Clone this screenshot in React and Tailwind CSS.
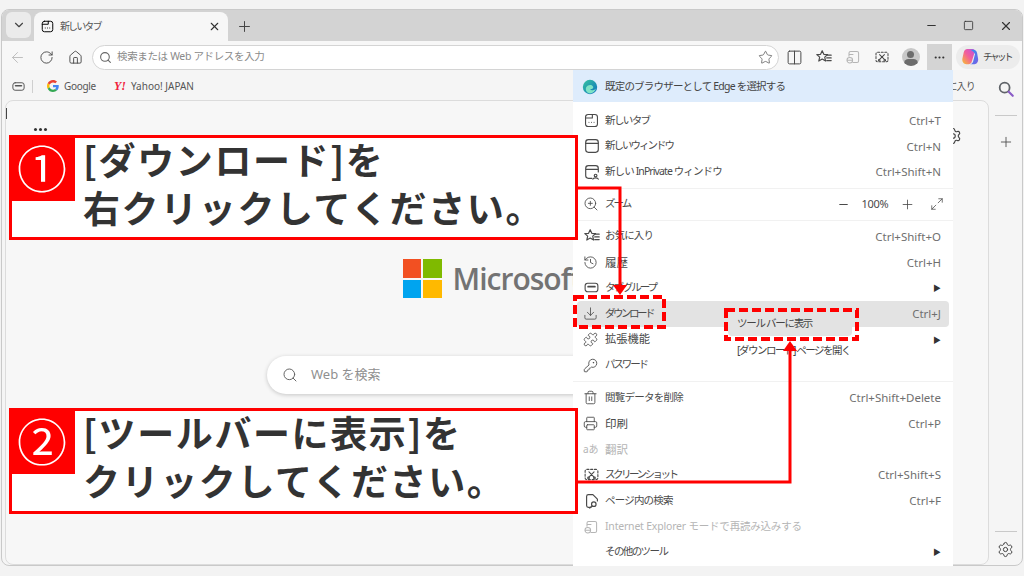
import {
  ArrowLeft, RotateCw, Home, Search, Star, X, Plus, Minus, ChevronDown, ZoomIn, History,
  Download, Puzzle, KeyRound, Trash2, Printer, Settings, MoreHorizontal, Square, Maximize2, Columns2,
} from "lucide-react";

const jp = "font-['Noto_Sans','Noto_Sans_CJK_JP',sans-serif]";

function Svg({ size = 18, children, className = "" }) {
  return (
    <svg width={size} height={size} viewBox="0 0 20 20" fill="none" stroke="currentColor" strokeWidth="1.3" strokeLinecap="round" strokeLinejoin="round" className={className}>
      {children}
    </svg>
  );
}

const NewTabIcon = ({ size }) => (
  <Svg size={size}>
    <rect x="3" y="3" width="14" height="14" rx="3" />
    <path d="M3 7h8V3M7 12h.01M10 12h.01M13 12h.01" />
  </Svg>
);
const WindowIcon = () => (
  <Svg>
    <rect x="3" y="3" width="14" height="14" rx="3" />
    <path d="M3 7h14" />
  </Svg>
);
const PrivateIcon = () => (
  <Svg>
    <path d="M10 17H6a3 3 0 0 1-3-3V6a3 3 0 0 1 3-3h8a3 3 0 0 1 3 3v4M3 7h14" />
    <circle cx="14" cy="14" r="1.5" />
    <path d="M11 18c.5-2 5.500-2 6 0" />
  </Svg>
);
const FavIcon = ({ size }) => (
  <Svg size={size}>
    <path d="M8 3l1.800 4 4.200.400-3.200 2.800 1 4.300L8 12.300l-3.800 2.200 1-4.300L2 7.400 6.200 7z" />
    <path d="M14 8h4M13 11h5M13 14h5" />
  </Svg>
);
const TabGroupIcon = ({ size }) => (
  <Svg size={size}>
    <rect x="2.500" y="5" width="15" height="10" rx="3" />
    <path d="M6 9h8" strokeWidth="2" />
  </Svg>
);
const ShotIcon = ({ size }) => (
  <Svg size={size}>
    <rect x="2.500" y="4" width="15" height="12" rx="2" strokeDasharray="2.500 2" />
    <path d="M7 7l6 6M13 7l-6 6" />
    <circle cx="6.500" cy="14" r="1" />
    <circle cx="13.500" cy="14" r="1" />
  </Svg>
);
const FindIcon = () => (
  <Svg>
    <path d="M9 17H6a2 2 0 0 1-2-2V5a2 2 0 0 1 2-2h5l5 5v2" />
    <circle cx="12" cy="13.500" r="2.500" />
    <path d="M10 15.500L7.500 18" />
  </Svg>
);
const IeIcon = ({ size }) => (
  <Svg size={size}>
    <path d="M7 3h8a2 2 0 0 1 2 2v10a2 2 0 0 1-2 2H10M5 9V5a2 2 0 0 1 2-2M5 7h5" />
    <circle cx="6" cy="14" r="3.500" />
    <path d="M3 14h6" />
  </Svg>
);
const SplitIcon = () => <Columns2 size={17} strokeWidth={1.4} />;

// sidebar search, the handle is purple in the reference
function SideSearch() {
  return (
    <svg width="18" height="18" viewBox="0 0 20 20" fill="none" strokeLinecap="round">
      <circle cx="8.500" cy="8.500" r="5.500" stroke="#5f6368" strokeWidth="2" />
      <path d="M13 13l4.500 4.500" stroke="#8a5cc7" strokeWidth="2.400" />
    </svg>
  );
}

function GoogleLogo() {
  return (
    <svg width="12" height="12" viewBox="0 0 48 48">
      <path fill="#EA4335" d="M24 9.500c3.500 0 6.700 1.200 9.200 3.600l6.900-6.900C35.900 2.400 30.500 0 24 0 14.600 0 6.500 5.400 2.600 13.200l8 6.200C12.500 13.700 17.800 9.500 24 9.500z" />
      <path fill="#4285F4" d="M47 24.500c0-1.600-.1-3.100-.4-4.500H24v9h12.900c-.6 3-2.200 5.500-4.700 7.200l7.700 6c4.500-4.200 7.100-10.300 7.100-17.700z" />
      <path fill="#FBBC05" d="M10.600 28.600c-.5-1.400-.8-3-.8-4.600s.3-3.200.8-4.600l-8-6.200C.9 16.500 0 20.100 0 24s.9 7.500 2.600 10.800z" />
      <path fill="#34A853" d="M24 48c6.500 0 11.900-2.100 15.900-5.800l-7.700-6c-2.200 1.400-4.900 2.300-8.200 2.300-6.200 0-11.500-4.200-13.400-9.900l-8 6.200C6.500 42.600 14.600 48 24 48z" />
    </svg>
  );
}

function EdgeLogo() {
  return (
    <svg width="16" height="16" viewBox="0 0 20 20">
      <defs>
        <linearGradient id="edgeA" x1="0" y1="0" x2="1" y2="1">
          <stop offset="0" stopColor="#37c6a0" />
          <stop offset="1" stopColor="#0c6fc0" />
        </linearGradient>
      </defs>
      <circle cx="10" cy="10" r="9" fill="url(#edgeA)" />
      <path d="M5 11c1-4 8-5 9-1 .5 2-2 3-4 2.500 2 2.500 5.500 2 7.500-.5-1 4-5 6.500-8 6-3-.5-5.500-3.500-4.500-7z" fill="#7fe3c5" />
    </svg>
  );
}

function CopilotLogo() {
  return (
    <svg width="18" height="18" viewBox="0 0 20 20">
      <defs>
        <linearGradient id="coA" x1="0" y1="0" x2="1" y2="1">
          <stop offset="0" stopColor="#2a9bf0" />
          <stop offset="1" stopColor="#7b5ce6" />
        </linearGradient>
        <linearGradient id="coB" x1="0" y1="1" x2="1" y2="0">
          <stop offset="0" stopColor="#f7c12e" />
          <stop offset="0.5" stopColor="#f3609a" />
          <stop offset="1" stopColor="#c04fe0" />
        </linearGradient>
      </defs>
      <path d="M7 1h6c1.500 0 2 1 2.500 2.500L12 15c-.5 2-2 3-3.500 3H6c-3 0-5-3-4.500-6L3 5c.5-2.500 2-4 4-4z" fill="url(#coB)" />
      <path d="M10 2h4c2 0 3.500 1.500 4 4l1 6c.5 3-1.500 6-4 6h-5c2 0 3-1.500 3.500-3l2-8C15 5 13 3 10 2z" fill="url(#coA)" />
    </svg>
  );
}

function ToolIcon({ children, className = "" }) {
  return <div className={`w-[29px] h-[26px] flex items-center justify-center text-[#4a4a4a] ${className}`}>{children}</div>;
}

function Row({ icon, label, shortcut, arrow, disabled, active, sp = "text-[10.500px] tracking-[-1.600px]" }) {
  return (
    <div className={`h-[25.8px] mx-1 pl-[6px] pr-[8px] flex items-center rounded ${active ? "bg-[#e3e3e3]" : ""} ${disabled ? "text-[#b5b5b5]" : "text-[#4a4a4a]"}`}>
      <div className="w-[22px] flex items-center">{icon}</div>
      <span className={`flex-1 ${sp}`}>{label}</span>
      {shortcut && <span className="text-[11.500px] text-[#6f6f6f]">{shortcut}</span>}
      {arrow && <span className="text-[8px] text-[#333]">▶</span>}
    </div>
  );
}

function Sep() {
  return (
    <div className="h-[6.400px] flex items-center">
      <div className="w-full h-px bg-[#f1f1f1]" />
    </div>
  );
}

function Callout({ className, num, line1, line2 }) {
  return (
    <div className={`absolute left-[9px] w-[569px] bg-white border-[3px] border-[#ff0000] ${className}`}>
      <div className="absolute -left-[3px] -top-[3px] w-[66px] h-[66px] pb-[4px] bg-[#ff0000] flex items-center justify-center text-white text-[50px] leading-none font-['Noto_Sans_CJK_JP',sans-serif]">
        {num}
      </div>
      <div className="pl-[71px] -mt-[3px] text-[37px] leading-[48px] font-bold tracking-[1.600px] text-[#333] font-['Noto_Sans_CJK_JP',sans-serif] whitespace-nowrap">
        <div>{line1}</div>
        <div>{line2}</div>
      </div>
    </div>
  );
}

export default function App() {
  return (
    <div className={`relative w-[1024px] h-[576px] overflow-hidden bg-[#f3f3f3] ${jp}`}>
      {/* browser window */}
      <div className="absolute left-[1px] top-[9px] w-[1022px] h-[557px] rounded-lg border border-[#c9c9c9] bg-[#f5f5f5] overflow-hidden flex flex-col">
        {/* tab strip */}
        <div className="h-[31px] bg-[#d3d3d3] flex items-end pl-1 shrink-0">
          <div className="w-[25px] h-[26px] mb-[3px] rounded-md bg-[#ebebeb] flex items-center justify-center text-[#444]">
            <ChevronDown size={14} />
          </div>
          <div className="ml-[3px] w-[194px] h-[29px] rounded-t-lg bg-[#f7f7f7] flex items-center pl-[6px] pr-[7px]">
            <NewTabIcon size={15} />
            <span className="ml-[5px] text-[10px] tracking-[-1.900px] text-[#555] flex-1">新しいタブ</span>
            <X size={13} className="text-[#333]" />
          </div>
          <div className="w-[32px] h-[29px] flex items-center justify-center text-[#444]">
            <Plus size={17} strokeWidth={1.4} />
          </div>
          <div className="flex-1" />
          <div className="flex items-center h-[31px] text-[#333] -mr-[2px]">
            <div className="w-[37px] flex justify-center"><Minus size={13} /></div>
            <div className="w-[37px] flex justify-center"><Square size={11} strokeWidth={1.800} /></div>
            <div className="w-[37px] flex justify-center"><X size={14} /></div>
          </div>
        </div>

        {/* toolbar */}
        <div className="h-[29px] pt-[3px] flex items-center pl-[1px] shrink-0 bg-[#f7f7f7]">
          <ToolIcon className="!text-[#b9b9b9]"><ArrowLeft size={17} strokeWidth={1.300} /></ToolIcon>
          <ToolIcon><RotateCw size={15} strokeWidth={1.500} /></ToolIcon>
          <ToolIcon><Home size={15} strokeWidth={1.500} /></ToolIcon>
          <div className="ml-[2px] w-[687px] h-[25px] rounded-full border border-[#d4d4d4] bg-white flex items-center pl-[6px] pr-[5px]">
            <Search size={13} className="text-[#666]" />
            <span className="ml-[5px] text-[10.500px] tracking-[-0.350px] text-[#8a8a8a] flex-1">検索または Web アドレスを入力</span>
            <Star size={15} strokeWidth={1.200} className="text-[#555]" />
          </div>
          <ToolIcon className="ml-[1px]"><SplitIcon /></ToolIcon>
          <ToolIcon><FavIcon size={18} /></ToolIcon>
          <ToolIcon className="!text-[#b5b5b5]"><IeIcon size={16} /></ToolIcon>
          <ToolIcon><ShotIcon size={16} /></ToolIcon>
          <ToolIcon>
            <div className="relative w-[18px] h-[18px] rounded-full bg-[#c8c8c8] overflow-hidden">
              <div className="absolute left-[5.500px] top-[3px] w-[7px] h-[7px] rounded-full bg-[#6c6c6c]" />
              <div className="absolute left-[2px] top-[11px] w-[14px] h-[9px] rounded-full bg-[#6c6c6c]" />
            </div>
          </ToolIcon>
          <div className="ml-[2px] w-[25px] h-[26px] bg-[#d4d4d4] flex items-center justify-center text-[#333]">
            <MoreHorizontal size={13} />
          </div>
          <div className="ml-1 w-[64px] h-[24px] rounded-full bg-[#ececec] flex items-center pl-[5px]">
            <CopilotLogo />
            <span className="ml-[4px] text-[9.500px] tracking-[-2.500px] text-[#444]">チャット</span>
          </div>
        </div>

        {/* bookmarks + content + sidebar */}
        <div className="flex-1 flex min-h-0">
          <div className="w-[987px] flex flex-col">
            <div className="h-[30px] pt-[2px] flex items-center pl-[9px] text-[10px] text-[#555] shrink-0">
              <TabGroupIcon size={15} />
              <div className="ml-[6px] w-px h-[13px] bg-[#cfcfcf]" />
              <div className="ml-[14px]"><GoogleLogo /></div>
              <span className="ml-[5px] tracking-[-0.300px]">Google</span>
              <span className="ml-[18px] text-[12px] font-bold italic text-[#f0203c] font-['Liberation_Serif',serif]">Y!</span>
              <span className="ml-[5px]">Yahoo! JAPAN</span>
              <div className="flex-1" />
              <span className="mr-[14px] tracking-[-0.800px]">お気に入り</span>
            </div>
            <div className="relative flex-1 ml-[3px] rounded-t-lg rounded-b-lg border border-[#dcdcdc] bg-[#f7f7f7]">
              <div className="absolute left-0 top-[7px] w-px h-[11px] bg-[#444]" />
              <div className="absolute left-[28px] top-[27px] flex gap-[2px]">
                <div className="w-[3px] h-[3px] rounded-full bg-[#333]" />
                <div className="w-[3px] h-[3px] rounded-full bg-[#333]" />
                <div className="w-[3px] h-[3px] rounded-full bg-[#333]" />
              </div>
              <Settings size={18} strokeWidth={1.500} className="absolute right-[26px] top-[26px] text-[#444]" />
              <div className="flex flex-col items-center pt-[158px]">
                <div className="flex items-center mr-[10px]">
                  <div className="grid grid-cols-2 gap-[2px] w-[39px] h-[39px]">
                    <div className="bg-[#f25022]" />
                    <div className="bg-[#7fba00]" />
                    <div className="bg-[#00a4ef]" />
                    <div className="bg-[#ffb900]" />
                  </div>
                  <span className="ml-[11px] text-[30px] leading-none font-semibold tracking-[-1px] text-[#737373] font-['Open_Sans',sans-serif]">Microsoft</span>
                </div>
                <div className="mt-[58px] w-[460px] h-[38px] rounded-full bg-white shadow-[0_1px_4px_rgba(0,0,0,0.2)] flex items-center pl-[15px]">
                  <Search size={16} strokeWidth={1.500} className="text-[#666]" />
                  <span className="ml-[13px] text-[13px] text-[#8f8f8f]">Web を検索</span>
                </div>
              </div>
            </div>
          </div>
          <div className="flex-1 flex flex-col items-center pt-[10px] pb-[7px] text-[#555]">
            <SideSearch />
            <div className="mt-[17px] w-[22px] h-px bg-[#c9c9c9]" />
            <Plus size={16} strokeWidth={1.400} className="mt-[18px]" />
            <div className="flex-1" />
            <div className="w-[22px] h-px bg-[#c9c9c9]" />
            <Settings size={17} strokeWidth={1.400} className="mt-[9px] text-[#444]" />
          </div>
        </div>
      </div>

      {/* edge menu */}
      <div className="absolute left-[573px] top-[70px] w-[380px] h-[496px] bg-white">
        <div className="h-[32px] pt-[1px] bg-[#deecfc] flex items-center pl-[9px]">
          <EdgeLogo />
          <span className="ml-[7px] text-[10.500px] tracking-[-0.800px] text-[#444]">既定のブラウザーとして Edge を選択する</span>
        </div>
        <div className="pt-[5.500px]">
          <Row icon={<NewTabIcon size={17} />} label="新しいタブ" shortcut="Ctrl+T" />
          <Row icon={<WindowIcon />} label="新しいウィンドウ" shortcut="Ctrl+N" sp="text-[10.500px] tracking-[-2px]" />
          <Row icon={<PrivateIcon />} label="新しい InPrivate ウィンドウ" shortcut="Ctrl+Shift+N" sp="text-[10.500px] tracking-[-0.900px]" />
          <Sep />
          <div className="h-[25.800px] mx-1 pl-[6px] pr-[5px] flex items-center text-[#4a4a4a]">
            <div className="w-[22px]"><ZoomIn size={16} strokeWidth={1.300} /></div>
            <span className="text-[10.500px] tracking-[-2px] flex-1">ズーム</span>
            <Minus size={13} className="mr-[9px]" />
            <span className="text-[11px] w-[32px] text-center tracking-[-0.300px]">100%</span>
            <Plus size={15} strokeWidth={1.300} className="ml-[9px]" />
            <Maximize2 size={14} strokeWidth={1.300} className="ml-[15px]" />
          </div>
          <Sep />
          <Row icon={<FavIcon size={18} />} label="お気に入り" shortcut="Ctrl+Shift+O" sp="text-[10.500px] tracking-[-0.900px]" />
          <Row icon={<History size={15} strokeWidth={1.400} />} label="履歴" shortcut="Ctrl+H" sp="text-[11.500px]" />
          <Row icon={<TabGroupIcon size={17} />} label="タブ グループ" arrow sp="text-[10.500px] tracking-[-2px]" />
          <Row active icon={<Download size={15} strokeWidth={1.300} />} label="ダウンロード" shortcut="Ctrl+J" sp="text-[10.500px] tracking-[-2.500px]" />
          <Row icon={<Puzzle size={15} strokeWidth={1.400} />} label="拡張機能" arrow sp="text-[11.250px]" />
          <Row icon={<KeyRound size={15} strokeWidth={1.400} />} label="パスワード" sp="text-[10.500px] tracking-[-2.100px]" />
          <Sep />
          <Row icon={<Trash2 size={15} strokeWidth={1.400} />} label="閲覧データを削除" shortcut="Ctrl+Shift+Delete" sp="text-[10.500px] tracking-[-0.750px]" />
          <Row icon={<Printer size={15} strokeWidth={1.400} />} label="印刷" shortcut="Ctrl+P" sp="text-[11.500px]" />
          <Row disabled icon={<span className="text-[10px] leading-none">aあ</span>} label="翻訳" sp="text-[11.500px]" />
          <Row icon={<ShotIcon size={17} />} label="スクリーンショット" shortcut="Ctrl+Shift+S" sp="text-[10.500px] tracking-[-2.500px]" />
          <Row icon={<FindIcon />} label="ページ内の検索" shortcut="Ctrl+F" sp="text-[10.500px] tracking-[-0.800px]" />
          <Row disabled icon={<IeIcon size={16} />} label="Internet Explorer モードで再読み込みする" sp="text-[10.500px] tracking-[-0.200px]" />
          <Row label="その他のツール" arrow sp="text-[10.500px] tracking-[-1.600px]" />
        </div>

        {/* download submenu */}
        <div className="absolute left-[155px] top-[242px] w-[124px] h-[44px] text-[10.500px] text-[#444]">
          <div className="h-[24px] bg-[#e3e3e3] rounded flex items-center pl-[9px] tracking-[-1.300px]">ツール バーに表示</div>
          <div className="mt-[2px] h-[25px] flex items-center pl-[9px] whitespace-nowrap bg-white tracking-[-1.500px]">[ダウンロード] ページを開く</div>
        </div>
      </div>

      {/* annotations */}
      <svg className="absolute left-0 top-0" width="1024" height="576" fill="none">
        <path d="M578 188H620V286" stroke="#ff0000" strokeWidth="3" />
        <path d="M613 285h14l-7 10z" fill="#ff0000" />
        <path d="M578 482H790V350" stroke="#ff0000" strokeWidth="3" />
        <path d="M783 351h14l-7-10z" fill="#ff0000" />
        <rect x="575" y="297" width="89" height="30" stroke="#ff0000" strokeWidth="4" strokeDasharray="9 4" />
        <rect x="726" y="310" width="131" height="29" stroke="#ff0000" strokeWidth="4" strokeDasharray="9 4" />
      </svg>
      <Callout className="top-[135px] h-[105px]" num="①" line1="[ダウンロード]を" line2="右クリックしてください。" />
      <Callout className="top-[408px] h-[106px]" num="②" line1="[ツールバーに表示]を" line2="クリックしてください。" />
    </div>
  );
}
